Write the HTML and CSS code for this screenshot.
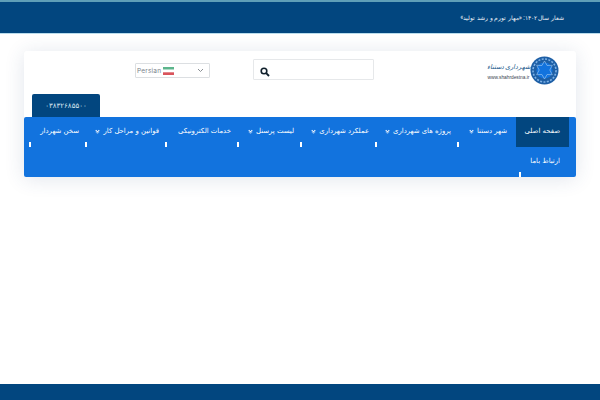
FILE: index.html
```html
<!DOCTYPE html>
<html lang="fa">
<head>
<meta charset="utf-8">
<title>شهرداری دستنا</title>
<link rel="stylesheet" href="styles.css">
</head>
<body>
<div class="page">
  <header class="topbar"><p class="slogan" dir="rtl">شعار سال ۱۴۰۲: «مهار تورم و رشد تولید»</p></header>
  <main class="content">
    <section class="card">
      <div class="brand-row">
        <div class="lang">
          <span class="lang-name">Persian</span>
          <svg class="flag" width="11" height="8" viewBox="0 0 11 8"><rect width="11" height="2.7" fill="#5cb58c"/><rect y="2.7" width="11" height="2.6" fill="#fff"/><rect y="5.3" width="11" height="2.7" fill="#d9545c"/></svg>
          <svg class="caret" width="7" height="5" viewBox="0 0 7 5"><path d="M1 1l2.5 2.5L6 1" fill="none" stroke="#8a8f94" stroke-width="1"/></svg>
        </div>
        <div class="search">
          <svg width="10" height="10" viewBox="0 0 10 10"><circle cx="4" cy="4" r="2.8" fill="none" stroke="#10202c" stroke-width="1.6"/><path d="M6.2 6.2L9 9" stroke="#10202c" stroke-width="1.9"/></svg>
        </div>
        <div class="logo">
          <div class="logo-text">
            <span class="logo-title" dir="rtl">شهرداری دستناء</span>
            <span class="logo-url">www.shahrdestna.ir</span>
          </div>
          <svg class="logo-mark" width="29" height="29" viewBox="0 0 29 29">
            <circle cx="14.5" cy="14.5" r="14" fill="#1d5fa6"/>
            <circle cx="14.5" cy="14.5" r="11.5" fill="none" stroke="#7fb2e6" stroke-width="1.6" stroke-dasharray="2 1.4"/>
            <circle cx="14.5" cy="14.5" r="8" fill="#1273de"/>
            <path d="M14.5 5l2.6 4.5 5.2-.2-2.5 4.7 2.5 4.7-5.2-.2-2.6 4.5-2.6-4.5-5.2.2 2.5-4.7-2.5-4.7 5.2.2z" fill="none" stroke="#a9cff2" stroke-width=".6"/>
          </svg>
        </div>
      </div>
      <a class="phone">۰۳۸۳۲۶۸۵۵۰۰</a>
      <nav class="nav" dir="rtl">
        <a class="item active">صفحه اصلی</a>
        <a class="item w-59">شهر دستنا<i class="chev"></i></a>
        <a class="item w-82 tight">پروژه های شهرداری<i class="chev"></i></a>
        <a class="item w-75 tight">عملکرد شهرداری<i class="chev"></i></a>
        <a class="item w-63 tight">لیست پرسنل<i class="chev"></i></a>
        <a class="item w-72 tight">خدمات الکترونیکی</a>
        <a class="item w-80 tight">قوانین و مراحل کار<i class="chev"></i></a>
        <a class="item w-56 tight">سخن شهردار</a>
        <a class="item w-50">ارتباط باما</a>
      </nav>
    </section>
  </main>
  <footer class="footer"></footer>
</div>
</body>
</html>
```
FILE: styles.css
```css
* { box-sizing: border-box; }
html, body { margin: 0; padding: 0; background: #fff; }
body { font-family: "DejaVu Sans", sans-serif; }
.page { width: 600px; height: 400px; display: flex; flex-direction: column; overflow: hidden; }

.topbar {
  height: 34px;
  background: #02467f;
  border-top: 2px solid #5f9fb8;
  border-bottom: 1px solid #b9dcec;
  display: flex;
  justify-content: flex-end;
  align-items: center;
  padding-right: 36px;
}
.slogan { margin: 0; color: #eef3f8; font-family: Roboto, sans-serif; font-size: 6.4px; line-height: 12px; }

.content { flex: 1; padding: 17px 24px 0; }
.card { display: flex; flex-direction: column; background: #fff; border-radius: 3px; box-shadow: 0 2px 20px rgba(40, 70, 120, .14); height: 126px; }

.brand-row { height: 43px; position: relative; display: flex; }
.lang {
  margin: 12px 0 0 111px;
  width: 75px; height: 15px;
  border: 1px solid #dcdfe2;
  border-radius: 1px;
  display: flex; align-items: center;
  padding: 0 4px 0 1px;
  color: #77808a;
}
.lang-name { font-family: "Inter", sans-serif; font-size: 6.5px; letter-spacing: .2px; }
.flag { margin-left: 2px; }
.caret { margin-left: auto; margin-right: 1px; }
.search {
  margin: 8px 0 0 43px;
  width: 121px; height: 21px;
  border: 1px solid #e6e8ea;
  border-radius: 1px;
  display: flex; align-items: flex-end;
  padding: 0 0 2px 6px;
}
.logo { margin: 5px 17px 0 auto; display: flex; align-items: center; height: 29px; gap: 1px; }
.logo-text { display: flex; flex-direction: column; align-items: center; width: 41px; }
.logo-title { font-family: Roboto, sans-serif; font-style: italic; font-size: 6.5px; line-height: 15px; color: #1a5a8c; white-space: nowrap; }
.logo-url { font-family: "Liberation Sans", sans-serif; font-size: 4.8px; line-height: 6px; color: #3a4450; white-space: nowrap; }

.phone {
  align-self: flex-start;
  margin-left: 8px;
  width: 68px; height: 23px;
  background: #02467f;
  border-radius: 2px 2px 0 0;
  color: #dbe8f2;
  font-size: 7px;
  display: flex; align-items: center; justify-content: center;
}

.nav {
  display: flex; flex-wrap: wrap; align-content: flex-start;
  height: 60px;
  padding-right: 7px;
  background: #1273de;
  border-radius: 2px;
}
.item {
  position: relative;
  height: 30px;
  width: 53px;
  color: #fff;
  font-size: 6.9px;
  font-weight: 400;
  padding-right: 9px;
  line-height: 29px;
  white-space: nowrap;
}
.item.tight { padding-right: 6px; }
.item::after { content: ""; position: absolute; left: 0; top: 25px; width: 1.5px; height: 5px; background: #fff; }
.item.active { background: #02467f; }
.item.active::after { display: none; }
.w-59 { width: 59px; }
.w-82 { width: 82px; }
.w-75 { width: 75px; }
.w-63 { width: 63px; }
.w-72 { width: 72px; }
.w-80 { width: 80px; }
.w-56 { width: 56px; }
.w-50 { width: 50px; }

.chev { display: inline-block; width: 3px; height: 3px; margin: 0 4px 1px 0; border-right: 1px solid #fff; border-bottom: 1px solid #fff; box-shadow: 1px 1px 0 rgba(255, 255, 255, .45); transform: rotate(45deg); vertical-align: middle; }

.footer { height: 16px; background: #02467f; }
```
